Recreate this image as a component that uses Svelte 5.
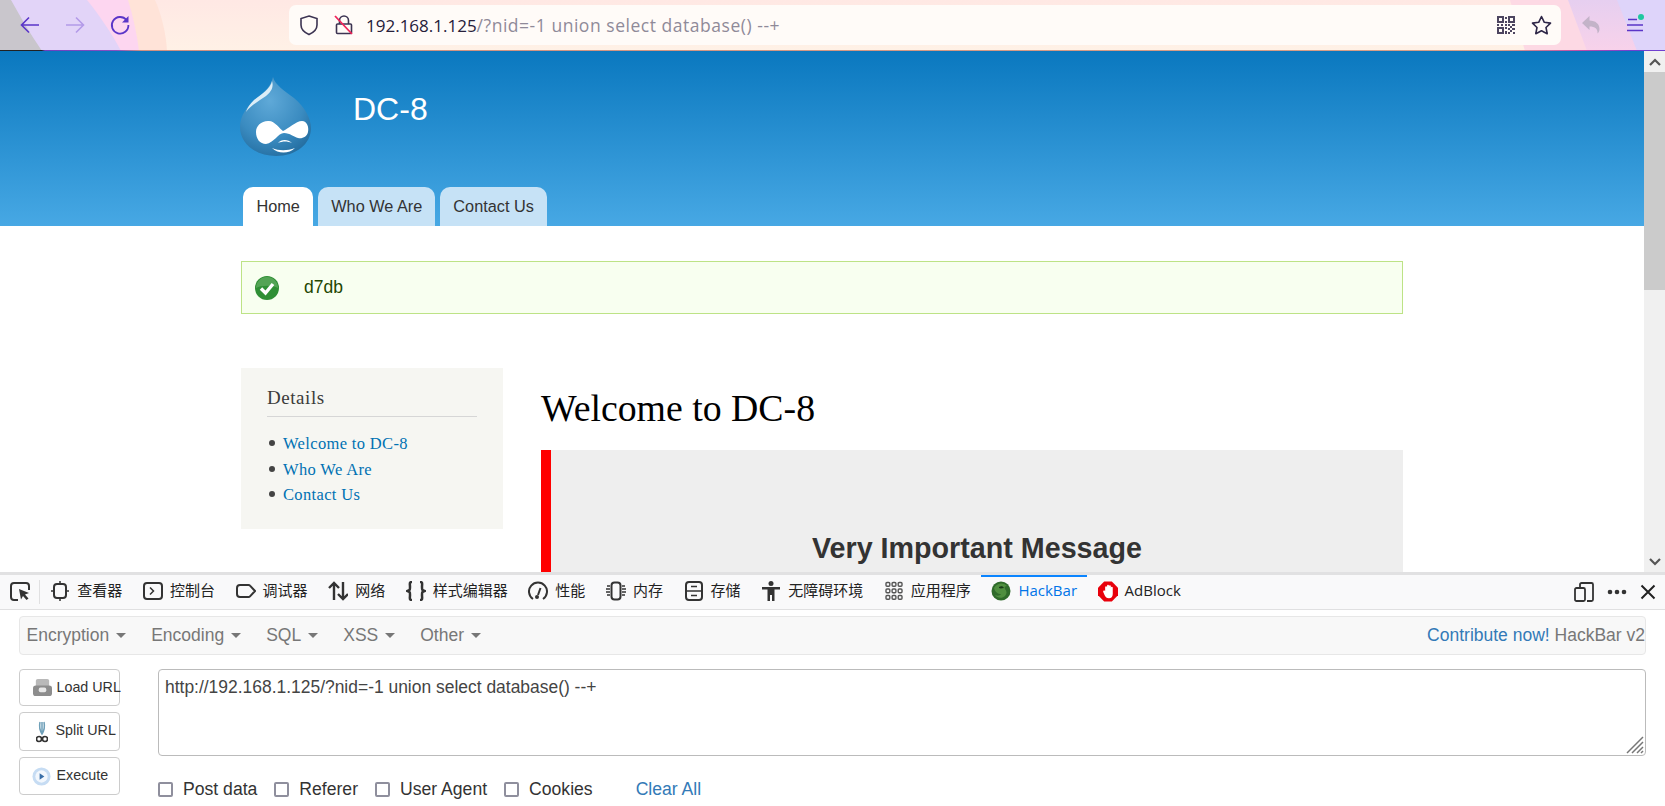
<script>
  const tabs = [
    { id: 'inspector', label: '查看器' },
    { id: 'console', label: '控制台' },
    { id: 'debugger', label: '调试器' },
    { id: 'network', label: '网络' },
    { id: 'style', label: '样式编辑器' },
    { id: 'perf', label: '性能' },
    { id: 'memory', label: '内存' },
    { id: 'storage', label: '存储' },
    { id: 'a11y', label: '无障碍环境' },
    { id: 'apps', label: '应用程序' },
    { id: 'hackbar', label: 'HackBar', active: true },
    { id: 'adblock', label: 'AdBlock', latin: true }
  ];
  const menus = ['Encryption', 'Encoding', 'SQL', 'XSS', 'Other'];
  const checks = ['Post data', 'Referer', 'User Agent', 'Cookies'];
</script>

<div class="root">
  <header class="chrome">
    <svg class="theme" viewBox="0 0 1665 51" preserveAspectRatio="none" aria-hidden="true">
      <defs>
        <linearGradient id="base" x1="0" x2="0" y1="0" y2="1">
          <stop offset="0" stop-color="#ffe8e4" />
          <stop offset="1" stop-color="#fff1e6" />
        </linearGradient>
        <linearGradient id="mauve" x1="0" x2="0" y1="0" y2="1">
          <stop offset="0" stop-color="#e6cff0" />
          <stop offset="1" stop-color="#f8d2ea" />
        </linearGradient>
        <linearGradient id="rule" x1="0" x2="1" y1="0" y2="0">
          <stop offset="0" stop-color="#222" />
          <stop offset="0.025" stop-color="#222" />
          <stop offset="0.027" stop-color="#6a3fc0" />
          <stop offset="0.07" stop-color="#8a4fc0" />
          <stop offset="0.085" stop-color="#d09080" />
          <stop offset="0.9" stop-color="#d8a088" />
          <stop offset="0.95" stop-color="#c04aa8" />
          <stop offset="0.98" stop-color="#7040d0" />
          <stop offset="1" stop-color="#7040d0" />
        </linearGradient>
      </defs>
      <rect width="1665" height="51" fill="url(#base)" />
      <path d="M0 0H155C162 16 166 34 167 51H0Z" fill="#ffe3d8" />
      <path d="M0 0H128C133 16 137 34 139 51H0Z" fill="#fdd6f0" />
      <path d="M0 0H87C100 16 112 34 121 51H0Z" fill="#e2d4f8" />
      <path d="M0 0H11C20 16 30 34 42 51H0Z" fill="#c9c6cc" />
      <path d="M1510 0H1665V51H1525Z" fill="#fdd9e4" />
      <path d="M1568 0H1665V51H1587Z" fill="url(#mauve)" />
      <path d="M1617 0H1665V51H1637Z" fill="#ded4fa" />
      <rect y="50" width="1665" height="1" fill="url(#rule)" />
    </svg>

    <button class="nav-btn first" aria-label="Back">
      <svg width="22" height="22" viewBox="0 0 22 22" fill="none" stroke="#5a35c8" stroke-width="1.6"><path d="M20 11H3M10 3.500 2.500 11 10 18.500" /></svg>
    </button>
    <button class="nav-btn" aria-label="Forward">
      <svg width="22" height="22" viewBox="0 0 22 22" fill="none" stroke="#b39ae8" stroke-width="1.6"><path d="M2 11h17M12 3.500l7.500 7.500L12 18.500" /></svg>
    </button>
    <button class="nav-btn" aria-label="Reload">
      <svg width="22" height="22" viewBox="0 0 22 22" fill="none" stroke="#5a35c8" stroke-width="1.8"><path d="M17.500 6A8.300 8.300 0 1 0 19.400 11" /><path d="M19.500 2v6.500H13Z" fill="#5a35c8" stroke="none" /></svg>
    </button>

    <div class="urlbar">
      <svg class="u-shield" width="20" height="22" viewBox="0 0 20 22" fill="none" stroke="#3c3352" stroke-width="1.6"><path d="M10 2 18 4.500V11c0 4.500-3.500 7.500-8 9.500C5.500 18.500 2 15.500 2 11V4.500Z" /></svg>
      <svg class="u-lock" width="20" height="22" viewBox="0 0 20 22" fill="none"><path d="M5.500 10V6.500a4.500 4.500 0 0 1 9 0V10M3.500 10h13a1 1 0 0 1 1 1v7.500a1 1 0 0 1-1 1h-13a1 1 0 0 1-1-1V11a1 1 0 0 1 1-1Z" stroke="#3c3352" stroke-width="1.600" /><path d="M1 2 18 20" stroke="#f0245a" stroke-width="1.800" /></svg>
      <span class="url"><span class="host">192.168.1.125</span><span class="query">/?nid=-1 union select database() --+</span></span>
      <svg class="u-qr" width="18" height="18" viewBox="0 0 18 18" aria-hidden="true"><g fill="#4d4560"><path d="M0 0h7v7H0ZM2 2v3h3V2ZM11 0h7v7h-7ZM13 2v3h3V2ZM0 11h7v7H0ZM2 13v3h3v-3Z" fill-rule="evenodd" /><path d="M8 1h2v2H8ZM8 5h2v2H8ZM8 8h2v2H8ZM0 8h2v2H0ZM4 8h2v2H4ZM11 8h2v2h-2ZM15 8h3v2h-3ZM8 11h2v2H8ZM13 10h2v2h-2ZM11 12h2v2h-2ZM15 12h3v2h-3ZM8 15h2v3H8ZM13 14h2v2h-2ZM11 16h2v2h-2ZM16 16h2v2h-2Z" /></g></svg>
      <svg class="u-star" width="21" height="20" viewBox="0 0 21 20" fill="none" stroke="#2f2748" stroke-width="1.600" stroke-linejoin="round"><path d="M10.500 1.500 13.300 7.300 19.500 8.100 15 12.500 16.200 18.700 10.500 15.700 4.800 18.700 6 12.500 1.500 8.100 7.700 7.300Z" /></svg>
    </div>

    <div class="right-tools">
      <svg width="18" height="18" viewBox="0 0 18 18" fill="#c3b3c8" aria-hidden="true"><path d="M0 7 7.500 0V4.500C13.500 4.500 17.500 8 17.500 13c0 2-1 3.500-2 4.500 .5-4.500-2.500-7-8-7V14Z" /></svg>
      <span class="menu-ico">
        <svg width="16" height="14" viewBox="0 0 16 14" fill="none" stroke="#5a35c8" stroke-width="1.500"><path d="M1 1.500h9M0 7h16M0 12.500h16" /></svg>
        <i class="dot"></i>
      </span>
    </div>
  </header>

  <div class="viewport">
    <main class="page">
      <section class="hero">
        <div class="wrap">
          <div class="brand">
            <svg class="logo" viewBox="0 0 72 80" aria-hidden="true">
              <defs>
                <radialGradient id="drop" cx="0.42" cy="0.3" r="0.8">
                  <stop offset="0" stop-color="#5fa9d8" />
                  <stop offset="0.6" stop-color="#3a8bc0" />
                  <stop offset="1" stop-color="#20689a" />
                </radialGradient>
              </defs>
              <path d="M33 0C35 8 45 14 54 21 65 30 71 42 71 51 71 67 56 79 36 79 16 79 0 67 0 50 0 38 8 28 17 21 25 15 31 9 33 0Z" fill="url(#drop)" />
              <path d="M32 4C31 11 22 17 14 23 10 27 7 31 6 35 11 28 19 24 26 19 31 15 34 10 32 4Z" fill="#dcedf7" />
              <path d="M28 44C34 43 40 52 43 54 48 52 56 44 62 44 67 44 69 50 68 55 67 60 62 62 58 61 54 60 50 56 44 56 38 56 34 66 26 67 20 67 16 62 16 55 16 49 21 44 28 44Z" fill="#fff" />
              <path d="M38 66C41 62 48 62 52 66 47 64 43 64 38 66Z" fill="#fff" />
              <path d="M32 71C39 74 47 74 55 71 49 77 38 77 32 71Z" fill="#fff" />
            </svg>
            <span class="site">DC-8</span>
          </div>
          <nav class="tabs">
            <a class="tab on" href="#home">Home</a>
            <a class="tab" href="#who">Who We Are</a>
            <a class="tab" href="#contact">Contact Us</a>
          </nav>
        </div>
      </section>

      <div class="wrap content">
        <div class="notice">
          <svg width="26" height="26" viewBox="0 0 26 26" aria-hidden="true">
            <circle cx="13" cy="13" r="12" fill="#2f8f35" />
            <path d="M2 13a11 11 0 0 1 22 0c-5-3-17-3-22 0Z" fill="#6cb36a" opacity=".6" />
            <path d="M7 13.500l4.500 4.500L19 9" fill="none" stroke="#fff" stroke-width="3.400" />
          </svg>
          <span>d7db</span>
        </div>

        <div class="columns">
          <aside class="side">
            <h2>Details</h2>
            <ul>
              <li><a href="#w">Welcome to DC-8</a></li>
              <li><a href="#h">Who We Are</a></li>
              <li><a href="#c">Contact Us</a></li>
            </ul>
          </aside>
          <article class="article">
            <h1>Welcome to DC-8</h1>
            <div class="callout">
              <h3>Very Important Message</h3>
            </div>
          </article>
        </div>
      </div>
    </main>

    <div class="scrollbar">
      <span class="sb-btn"><svg width="12" height="8" viewBox="0 0 12 8" fill="none" stroke="#555" stroke-width="2.200"><path d="M1 7l5-5 5 5" /></svg></span>
      <span class="sb-thumb"></span>
      <span class="sb-track"></span>
      <span class="sb-btn"><svg width="12" height="8" viewBox="0 0 12 8" fill="none" stroke="#555" stroke-width="2.200"><path d="M1 1l5 5 5-5" /></svg></span>
    </div>
  </div>

  <section class="devtools">
    <div class="dt-bar">
      <span class="picker">
        <svg width="20" height="20" viewBox="0 0 20 20" fill="none" stroke="#333" stroke-width="2"><path d="M8 18H4a3 3 0 0 1-3-3V4a3 3 0 0 1 3-3h12a3 3 0 0 1 3 3v4" /><path d="M9 7l10 4-4 1.500 3.500 4-2 1.500-3.500-4-2 3.500Z" fill="#333" stroke="none" /></svg>
      </span>
      {#each tabs as t}
        <span class="dt-tab" class:active={t.active} class:latin={t.latin}>
          <span class="ico">
            {#if t.id === 'inspector'}
              <svg width="20" height="20" viewBox="0 0 20 20" fill="none" stroke="#333" stroke-width="2"><rect x="4" y="3" width="12" height="14" rx="3" /><path d="M10 0v3M10 17v3M1 10h3M16 10h3" stroke-width="1.500" /></svg>
            {:else if t.id === 'console'}
              <svg width="20" height="20" viewBox="0 0 20 20" fill="none" stroke="#333" stroke-width="2"><rect x="1" y="2" width="18" height="16" rx="3" /><path d="M7 6.500 10.500 10 7 13.500" stroke-width="1.500" /></svg>
            {:else if t.id === 'debugger'}
              <svg width="20" height="20" viewBox="0 0 20 20" fill="none" stroke="#333" stroke-width="2"><path d="M4 4h8.500a2 2 0 0 1 1.500.7L19 10l-5 5.300a2 2 0 0 1-1.500.7H4a3 3 0 0 1-3-3V7a3 3 0 0 1 3-3Z" /></svg>
            {:else if t.id === 'network'}
              <svg width="20" height="20" viewBox="0 0 20 20" fill="none" stroke="#333" stroke-width="2.400"><path d="M6 19V2M1 7l5-5 5 5M15 1v17M10 13l5 5 5-5" /></svg>
            {:else if t.id === 'style'}
              <svg width="20" height="20" viewBox="0 0 20 20" fill="none" stroke="#333" stroke-width="2.500"><path d="M6 1C3 1 4 3 4 6S4 9 1.500 10C4 11 4 11 4 14s-1 5 2 5M14 1c3 0 2 2 2 5s0 3 2.500 4C16 11 16 11 16 14s1 5-2 5" /></svg>
            {:else if t.id === 'perf'}
              <svg width="20" height="20" viewBox="0 0 20 20" fill="none" stroke="#333" stroke-width="2"><path d="M5 18A9 9 0 1 1 15 18" /><path d="M12.500 7 10 14" /><circle cx="9" cy="16" r="2" fill="#333" stroke="none" /></svg>
            {:else if t.id === 'memory'}
              <svg width="20" height="20" viewBox="0 0 20 20" fill="none" stroke="#333" stroke-width="1.500"><rect x="5.500" y="1.500" width="9" height="17" rx="3" stroke-width="2" /><path d="M1 5h3M0 8h4M0 11h4M1 14h3M16 5h3M16 8h4M16 11h4M16 14h3" /></svg>
            {:else if t.id === 'storage'}
              <svg width="18" height="20" viewBox="0 0 18 20" fill="none" stroke="#333" stroke-width="2"><rect x="1" y="1" width="16" height="18" rx="3" /><path d="M1 10h16M6 5.500h6M6 14.500h6" stroke-width="1.500" /></svg>
            {:else if t.id === 'a11y'}
              <svg width="18" height="20" viewBox="0 0 18 20" fill="#333"><circle cx="9" cy="2.500" r="2.500" /><path d="M0 6h18v2.500h-5.500V20h-2.500v-6H8v6H5.500V8.500H0Z" /></svg>
            {:else if t.id === 'apps'}
              <svg width="18" height="20" viewBox="0 0 18 20" fill="none" stroke="#555" stroke-width="1.400"><rect x="1" y="1.500" width="3.800" height="3.800" rx="1" /><rect x="7.100" y="1.500" width="3.800" height="3.800" rx="1" /><rect x="13.200" y="1.500" width="3.800" height="3.800" rx="1" /><rect x="1" y="8" width="3.800" height="3.800" rx="1" /><rect x="7.100" y="8" width="3.800" height="3.800" rx="1" /><rect x="13.200" y="8" width="3.800" height="3.800" rx="1" /><rect x="1" y="14.500" width="3.800" height="3.800" rx="1" /><rect x="7.100" y="14.500" width="3.800" height="3.800" rx="1" /><rect x="13.200" y="14.500" width="3.800" height="3.800" rx="1" /></svg>
            {:else if t.id === 'hackbar'}
              <svg width="20" height="20" viewBox="0 0 20 20"><circle cx="10" cy="10" r="9.500" fill="#2f6b2a" /><path d="M3 7c3-5 9-6 13-2-2 0-3 1-2 3 2 2 2 5 0 7-3 3-8 2-10-1 2 1 5 1 6-1-3 0-6-2-7-6Z" fill="#4f8f3f" /><path d="M8 6c2-1 4-1 5 1-2 0-3 1-5 0Z" fill="#173b17" /></svg>
            {:else}
              <svg width="21" height="21" viewBox="0 0 21 21"><path d="M6.500 0h8L21 6.500v8L14.500 21h-8L0 14.500v-8Z" fill="#e8000b" /><path transform="translate(1 0)" d="M6.500 10V6a1 1 0 0 1 2 0V4.500a1 1 0 0 1 2 0V5a1 1 0 0 1 2 0v1.500a1 1 0 0 1 2 0V13c0 3-1.500 4.500-4 4.500s-3.500-1-4.500-3L4.500 11c-.5-1.300 1-2 2-1Z" fill="#fff" /></svg>
            {/if}
          </span>
          <span class="lbl">{t.label}</span>
        </span>
      {/each}
      <span class="dt-right">
        <svg width="20" height="20" viewBox="0 0 20 20" fill="none" stroke="#333" stroke-width="1.800"><path d="M6 5V2.500A1.500 1.500 0 0 1 7.500 1h10A1.500 1.500 0 0 1 19 2.500v15a1.500 1.500 0 0 1-1.500 1.500H13" /><rect x="1" y="6" width="10" height="13" rx="1.500" /></svg>
        <svg width="20" height="20" viewBox="0 0 20 20" fill="#333"><circle cx="3" cy="10" r="2.300" /><circle cx="10" cy="10" r="2.300" /><circle cx="17" cy="10" r="2.300" /></svg>
        <svg width="16" height="16" viewBox="0 0 16 16" fill="none" stroke="#222" stroke-width="2"><path d="M1.500 1.500l13 13M14.500 1.500l-13 13" /></svg>
      </span>
    </div>

    <div class="hb">
      <div class="hb-nav">
        <div class="hb-menus">
          {#each menus as m}
            <span class="hb-menu">{m}<i class="caret"></i></span>
          {/each}
        </div>
        <div class="hb-links"><a href="#contribute">Contribute now!</a> HackBar v2</div>
      </div>

      <div class="hb-body">
        <div class="hb-btns">
          <button class="hb-btn b1">
            <span class="slot"><svg width="21" height="19" viewBox="0 0 22 20" aria-hidden="true"><rect x="4" y="1" width="14" height="10" rx="2" fill="#b9b9b9" /><rect x="1" y="8" width="20" height="11" rx="3" fill="#8d8d8d" /><rect x="7" y="10" width="8" height="5" rx="2" fill="#e8e8e8" /></svg></span>
            <span class="btxt">Load URL</span>
          </button>
          <button class="hb-btn b2">
            <span class="slot"><svg width="12" height="22" viewBox="0 0 12 22" fill="none" aria-hidden="true"><path d="M4 1C3 6 4 10 6 13 8 10 9 6 8 1M6 1v11" stroke="#6e9fb8" stroke-width="1.500" /><circle cx="3" cy="18" r="2.500" stroke="#333" stroke-width="1.600" /><circle cx="9" cy="18" r="2.500" stroke="#333" stroke-width="1.600" /></svg></span>
            <span class="btxt">Split URL</span>
          </button>
          <button class="hb-btn b3">
            <span class="slot"><svg width="19" height="19" viewBox="0 0 20 20" aria-hidden="true"><circle cx="10" cy="10" r="9.500" fill="#c6dcf3" /><circle cx="10" cy="10" r="6.500" fill="#f2f7fd" /><path d="M8 6.500 13 10l-5 3.500Z" fill="#3a6fa8" /></svg></span>
            <span class="btxt">Execute</span>
          </button>
        </div>
        <div class="hb-main">
          <div class="hb-text">
            <span>http://192.168.1.125/?nid=-1 union select database() --+</span>
            <svg class="grip" width="18" height="18" viewBox="0 0 18 18" stroke="#777" stroke-width="1.500" aria-hidden="true"><path d="M1 17 17 1M6 17 17 6M11 17l6-6M15 17l2-2" /></svg>
          </div>
          <div class="hb-checks">
            {#each checks as c}
              <label><i class="box"></i>{c}</label>
            {/each}
            <a class="clear" href="#clear">Clear All</a>
          </div>
        </div>
      </div>
    </div>
  </section>
</div>

<style>
  :global(body) { margin: 0; overflow: hidden; }
  .root {
    width: 1665px; height: 806px; display: flex; flex-direction: column; overflow: hidden;
    font-family: "Liberation Sans", Arial, sans-serif; background: #fff; color: #333;
  }

  /* browser chrome */
  .chrome { position: relative; height: 51px; flex: none; display: flex; align-items: center; padding-bottom: 1px; box-sizing: border-box; }
  .theme { position: absolute; inset: 0; width: 100%; height: 100%; }
  .nav-btn { position: relative; width: 22px; height: 22px; padding: 0; border: 0; background: none; margin-right: 23px; display: flex; flex: none; }
  .nav-btn.first { margin-left: 19px; }
  .urlbar {
    position: relative; margin-left: 135px; width: 1272px; flex: none; height: 40px; border-radius: 7px; background: #fffbf8;
    display: flex; align-items: center; box-sizing: border-box; padding: 0 9px 0 10px;
  }
  .u-lock { margin-left: 15px; }
  .url { margin-left: 12px; font: 17px "Open Sans", sans-serif; flex: 1; white-space: nowrap; }
  .host { color: #26203a; }
  .query { color: #8f8a99; font-size: 17.500px; letter-spacing: .53px; }
  .u-star { margin-left: 16px; }
  .right-tools { position: relative; display: flex; align-items: center; margin-left: 21px; gap: 27px; }
  .menu-ico { position: relative; display: flex; }
  .dot { position: absolute; right: -1px; top: -4px; width: 6px; height: 6px; border-radius: 50%; background: #1fc8a0; }

  /* page */
  .viewport { flex: 1; min-height: 0; display: flex; }
  .page { flex: 1; min-width: 0; overflow: hidden; background: #fff; }
  .hero { height: 175px; background: linear-gradient(#0a78bf, #47a8e4); box-sizing: border-box; }
  .wrap { width: 1162px; margin-left: 241px; }
  .brand { display: flex; align-items: flex-start; height: 136px; box-sizing: border-box; padding-top: 26px; margin-left: -1px; }
  .logo { width: 72px; height: 80px; display: block; }
  .site { margin-left: 41px; margin-top: 12px; font-size: 32px; line-height: 40px; color: #fff; }
  .tabs { display: flex; gap: 5px; padding-left: 2px; }
  .tab {
    height: 39px; line-height: 39px; padding: 0 13px; border-radius: 10px 10px 0 0; background: #c6e2f6;
    color: #333; font-size: 16.300px; text-decoration: none;
  }
  .tab.on { background: #fff; padding: 0 13.400px; }

  .content { padding-top: 35px; }
  .notice {
    height: 53px; box-sizing: border-box; border: 1px solid #bde386; background: #f8fff0; color: #234600;
    display: flex; align-items: center; padding-left: 12px; gap: 24px; font-size: 17.500px;
  }
  .columns { display: flex; margin-top: 54px; align-items: flex-start; }
  .side { width: 262px; height: 161px; background: #f6f6f2; box-sizing: border-box; padding: 15px 26px 0; flex: none; }
  .side h2 {
    margin: 0; font: 400 19px/30px "Liberation Serif", serif; color: #3b3b3b;
    height: 34px; box-sizing: border-box; border-bottom: 1px solid #d6d6d6; letter-spacing: .55px;
  }
  .side ul { list-style: none; margin: 14px 0 0; padding: 0; font: 16.500px/25.500px "Liberation Serif", serif; }
  .side li { padding-left: 16px; position: relative; letter-spacing: .35px; }
  .side li::before { content: ""; position: absolute; left: 2px; top: 9px; width: 6px; height: 6px; border-radius: 50%; background: #444; }
  .side a { color: #0071b3; text-decoration: none; }
  .article { margin-left: 38px; flex: 1; }
  .article h1 { margin: 0; padding-top: 15px; box-sizing: border-box; font: 400 37.800px/50px "Liberation Serif", serif; color: #000; height: 82px; }
  .callout { border-left: 10px solid #f00; background: #eee; height: 140px; padding-top: 81px; box-sizing: border-box; text-align: center; }
  .callout h3 { margin: 0; font-size: 28.700px; line-height: 34px; font-weight: 700; color: #333; white-space: nowrap; }

  .scrollbar { width: 21px; flex: none; display: flex; flex-direction: column; background: #f0f0f0; }
  .sb-btn { height: 21px; flex: none; display: flex; align-items: center; justify-content: center; }
  .sb-thumb { height: 218px; flex: none; background: #cbcbcb; }
  .sb-track { flex: 1; }

  /* devtools */
  .devtools { height: 234px; flex: none; border-top: 3px solid #e1e1e2; box-sizing: border-box; background: #fff; }
  .dt-bar {
    height: 34px; background: #f9f9fa; border-bottom: 1px solid #e0e0e1; display: flex; align-items: stretch;
    font: 15px/20px "Noto Sans CJK SC", sans-serif; color: #222; box-sizing: content-box; position: relative;
  }
  .picker { width: 29px; padding-left: 10px; margin: 5px 0; border-right: 1px solid #e0e0e1; display: flex; align-items: center; }
  .dt-tab { display: flex; align-items: center; padding: 0 10.300px 2px; gap: 7px; box-sizing: border-box; }
  .dt-tab.active { box-shadow: inset 0 2px 0 #0a84ff; color: #0074e8; }
  .dt-tab.active .lbl, .dt-tab.latin .lbl { font-family: "Open Sans", sans-serif; }
  .lbl { position: relative; top: -1px; white-space: nowrap; }
  .ico { display: flex; width: 20px; justify-content: center; }
  .dt-right { margin-left: auto; display: flex; align-items: center; gap: 13px; padding-right: 9px; }

  .hb { padding: 6px 19px 0; }
  .hb-nav {
    height: 39px; box-sizing: border-box; border: 1px solid #e7e7e7; border-radius: 4px; background: #f8f8f8;
    display: flex; justify-content: space-between; align-items: center; font-size: 17.500px; color: #777;
  }
  .hb-menus { display: flex; padding-left: 0; }
  .hb-menu { padding-left: 6.500px; padding-right: 18.500px; display: flex; align-items: center; white-space: nowrap; }
  .caret { margin-left: 7px; border-top: 5px solid #777; border-left: 5px solid transparent; border-right: 5px solid transparent; }
  .hb-links { white-space: nowrap; overflow: hidden; }
  .hb-links a { color: #337ab7; text-decoration: none; }
  .hb-body { display: flex; margin-top: 14px; }
  .hb-btns { width: 101px; flex: none; display: flex; flex-direction: column; }
  .hb-btn {
    width: 101px; box-sizing: border-box; border: 1px solid #ccc; border-radius: 4px; background: #fff; color: #333;
    font: 14.300px "Liberation Sans", sans-serif; padding: 0 0 0 12px; display: flex; align-items: center; white-space: nowrap; overflow: visible;
  }
  .slot { width: 24.500px; flex: none; display: flex; justify-content: flex-start; }
  .b2 .slot { padding-left: 4px; width: 19.500px; }
  .btxt { position: relative; top: -1px; }
  .b1 { height: 37px; }
  .b2 { height: 39px; margin-top: 6px; }
  .b2 .btxt { top: -2px; }
  .b3 { height: 38px; margin-top: 6px; }
  .hb-main { margin-left: 38px; flex: 1; }
  .hb-text {
    position: relative; height: 87px; box-sizing: border-box; border: 1px solid #bbb; border-radius: 4px; padding: 7px 6px;
    font-size: 17.450px; line-height: 20px; color: #444;
  }
  .grip { position: absolute; right: 1px; bottom: 1px; }
  .hb-checks { display: flex; align-items: center; margin-top: 23px; font-size: 17.600px; color: #333; height: 20px; }
  .hb-checks label { display: flex; align-items: center; gap: 10px; margin-right: 17px; white-space: nowrap; }
  .box { width: 15px; height: 15px; flex: none; box-sizing: border-box; border: 2px solid #8f8f9d; border-radius: 2px; background: #fff; }
  .clear { margin-left: 26px; color: #337ab7; text-decoration: none; white-space: nowrap; }
</style>
